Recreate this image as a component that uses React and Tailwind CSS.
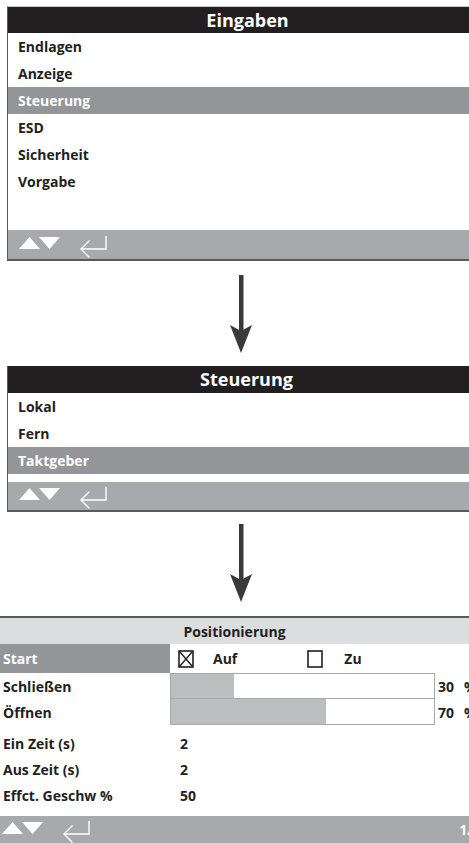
import React from "react";

const Footer = ({ className = "", children }) => (
  <div className={"flex items-center bg-[#a7a9ac] " + className}>
    <svg width="92" height="26" viewBox="0 0 92 26" className="shrink-0">
      <polygon points="0,17 10.5,5 21,17" fill="#fff" />
      <polygon points="20,5 41,5 30.5,17" fill="#fff" />
      <polyline points="87,4 87,17 62,17" fill="none" stroke="#fff" strokeWidth="1.4" />
      <polyline points="70.5,8.5 62,17 70.5,25.5" fill="none" stroke="#fff" strokeWidth="1.4" />
    </svg>
    {children}
  </div>
);

const Arrow = () => (
  <div className="flex justify-center pl-[12px]">
    <svg width="22" height="78" viewBox="0 0 22 78">
      <rect x="9" y="0" width="4.5" height="56" fill="#3a3a3c" />
      <path d="M0 50 L11 78 L22 50 L11 56 Z" fill="#3a3a3c" />
    </svg>
  </div>
);

const Row = ({ children, active }) => (
  <div
    className={
      "h-[27px] flex items-center pl-[10px] text-[14px] font-bold " +
      (active ? "bg-[#939598] text-white" : "text-[#231f20]")
    }
  >
    {children}
  </div>
);

const Check = ({ checked }) => (
  <svg width="16" height="18" viewBox="0 0 16 18" className="shrink-0">
    <rect x="1" y="1" width="14" height="16" fill="none" stroke="#231f20" strokeWidth="1.6" />
    {checked && (
      <g stroke="#231f20" strokeWidth="1.4">
        <line x1="1.5" y1="1.5" x2="14.5" y2="16.5" />
        <line x1="14.5" y1="1.5" x2="1.5" y2="16.5" />
      </g>
    )}
  </svg>
);

const Bar = ({ fill, top }) => (
  <div className={"h-[26px] w-[265px] shrink-0 border border-[#a7a9ac] bg-white flex " + (top ? "" : "border-t-0")}>
    <div className="h-full bg-[#bcbec0]" style={{ width: fill }} />
  </div>
);

export default function App() {
  const font = { fontFamily: "'Open Sans', 'Noto Sans', sans-serif" };
  return (
    <div className="w-[469px] h-[843px] bg-white overflow-hidden flex flex-col" style={font}>
      {/* Panel 1 */}
      <div className="mt-[6px] ml-[7px] w-[462px] border-t border-[#c7c8ca] border-l border-l-[#58595b] border-b-2 border-b-[#58595b] flex flex-col">
        <div className="h-[26px] bg-[#231f20] text-white text-[18px] font-bold flex items-center justify-center pl-[18px]">
          Eingaben
        </div>
        <Row>Endlagen</Row>
        <Row>Anzeige</Row>
        <Row active>Steuerung</Row>
        <Row>ESD</Row>
        <Row>Sicherheit</Row>
        <Row>Vorgabe</Row>
        <div className="h-[35px]" />
        <Footer className="h-[29px] pl-[11px]" />
      </div>

      <div className="mt-[14px]">
        <Arrow />
      </div>

      {/* Panel 2 */}
      <div className="mt-[13px] ml-[7px] w-[462px] border-l border-l-[#58595b] border-b-2 border-b-[#58595b] flex flex-col">
        <div className="h-[27px] bg-[#231f20] text-white text-[18px] font-bold flex items-center justify-center pl-[16px]">
          Steuerung
        </div>
        <Row>Lokal</Row>
        <Row>Fern</Row>
        <Row active>Taktgeber</Row>
        <div className="h-[8px]" />
        <Footer className="h-[28px] pl-[11px]" />
      </div>

      <div className="mt-[12px]">
        <Arrow />
      </div>

      {/* Panel 3 */}
      <div className="mt-[14px] w-[469px] border-t-2 border-[#58595b] flex flex-col text-[#231f20]">
        <div className="h-[26px] bg-[#dcddde] text-[14px] font-bold flex items-center justify-center">
          Positionierung
        </div>
        <div className="h-[29px] flex items-center text-[14px] font-bold">
          <div className="w-[170px] shrink-0 h-full bg-[#939598] text-white flex items-center pl-[3px]">Start</div>
          <div className="flex items-center pl-[8px]">
            <Check checked />
            <span className="ml-[19px]">Auf</span>
            <span className="ml-[70px] flex"><Check /></span>
            <span className="ml-[21px]">Zu</span>
          </div>
        </div>
        <div className="h-[26px] flex items-center text-[14px] font-bold">
          <div className="w-[170px] shrink-0 pl-[3px]">Schließen</div>
          <Bar fill={63} top />
          <div className="pl-[3px] shrink-0 whitespace-nowrap">30<span className="ml-[10px]">%</span></div>
        </div>
        <div className="h-[26px] flex items-center text-[14px] font-bold">
          <div className="w-[170px] shrink-0 pl-[3px]">Öffnen</div>
          <Bar fill={155} />
          <div className="pl-[3px] shrink-0 whitespace-nowrap">70<span className="ml-[10px]">%</span></div>
        </div>
        <div className="h-[5px]" />
        {[
          ["Ein Zeit (s)", "2"],
          ["Aus Zeit (s)", "2"],
          ["Effct. Geschw %", "50"],
        ].map(([l, v]) => (
          <div key={l} className="h-[26px] flex items-center text-[14px] font-bold">
            <div className="w-[180px] shrink-0 pl-[3px]">{l}</div>
            <div>{v}</div>
          </div>
        ))}
        <div className="h-[8px]" />
        <Footer className="h-[27px] pl-[2px] justify-between">
          <span className="text-white text-[14px] font-bold whitespace-nowrap mr-[-12px]">1/2</span>
        </Footer>
      </div>
    </div>
  );
}
